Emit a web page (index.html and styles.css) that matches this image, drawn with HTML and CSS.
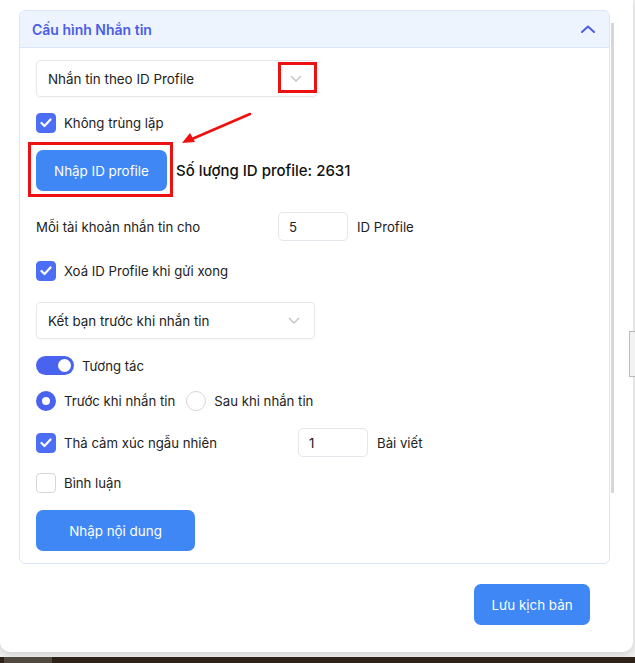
FILE: index.html
```html
<!DOCTYPE html>
<html lang="vi">
<head>
    <meta charset="UTF-8">
    <meta name="viewport" content="width=device-width, initial-scale=1.0">
    <title>Cấu hình Nhắn tin</title>
    <link rel="stylesheet" href="styles.css">
</head>
<body>
    <div class="modal">
        <div class="modal-body">
            <div class="scroll-area">
                <div class="card">
                    <div class="card-header">
                        <span class="card-title">Cấu hình Nhắn tin</span>
                        <svg class="chev-up" width="14" height="8" viewBox="0 0 14 8"><path d="M1 7 L7 1.5 L13 7" fill="none" stroke="#4b5ee4" stroke-width="2" stroke-linecap="round" stroke-linejoin="round"/></svg>
                    </div>
                    <div class="card-body">
                        <div class="select select-wide">
                            <span>Nhắn tin theo ID Profile</span>
                            <svg class="chev-down" width="12" height="7" viewBox="0 0 12 7"><path d="M1 1 L6 6 L11 1" fill="none" stroke="#c4c4c4" stroke-width="1.4"/></svg>
                            <span class="mark-box"></span>
                        </div>

                        <label class="check-row row-dup">
                            <span class="check on"><svg width="12" height="10" viewBox="0 0 12 10"><path d="M1.5 5 L4.5 8 L10.5 1.5" fill="none" stroke="#fff" stroke-width="2.2" stroke-linecap="round" stroke-linejoin="round"/></svg></span>
                            Không trùng lặp
                        </label>

                        <div class="import-row">
                            <button class="btn btn-marked">Nhập ID profile</button>
                            <span class="count">Số lượng ID profile: 2631</span>
                        </div>

                        <div class="field-row row-per">
                            <span class="field-label">Mỗi tài khoản nhắn tin cho</span>
                            <span class="num-input">5</span>
                            <span>ID Profile</span>
                        </div>

                        <label class="check-row row-del">
                            <span class="check on"><svg width="12" height="10" viewBox="0 0 12 10"><path d="M1.5 5 L4.5 8 L10.5 1.5" fill="none" stroke="#fff" stroke-width="2.2" stroke-linecap="round" stroke-linejoin="round"/></svg></span>
                            Xoá ID Profile khi gửi xong
                        </label>

                        <div class="select select-friend">
                            <span>Kết bạn trước khi nhắn tin</span>
                            <svg class="chev-down" width="12" height="7" viewBox="0 0 12 7"><path d="M1 1 L6 6 L11 1" fill="none" stroke="#c4c4c4" stroke-width="1.4"/></svg>
                        </div>

                        <div class="check-row row-toggle">
                            <span class="toggle"><span class="knob"></span></span>
                            Tương tác
                        </div>

                        <div class="radio-row">
                            <label class="radio-item"><span class="radio on"></span>Trước khi nhắn tin</label>
                            <label class="radio-item"><span class="radio"></span>Sau khi nhắn tin</label>
                        </div>

                        <div class="field-row row-react">
                            <label class="check-row field-label react-label">
                                <span class="check on"><svg width="12" height="10" viewBox="0 0 12 10"><path d="M1.5 5 L4.5 8 L10.5 1.5" fill="none" stroke="#fff" stroke-width="2.2" stroke-linecap="round" stroke-linejoin="round"/></svg></span>
                                Thả cảm xúc ngẫu nhiên
                            </label>
                            <span class="num-input">1</span>
                            <span>Bài viết</span>
                        </div>

                        <label class="check-row row-comment">
                            <span class="check"></span>
                            Bình luận
                        </label>

                        <button class="btn btn-content">Nhập nội dung</button>

                        <!-- mũi tên chú thích -->
                        <svg class="arrow" width="80" height="40" viewBox="0 0 80 40">
                            <path d="M70 2 L12 27" stroke="#f01010" stroke-width="2.6" stroke-linecap="round"/>
                            <path d="M2 31 L10 21 L15 30 Z" fill="#f01010"/>
                        </svg>
                    </div>
                </div>
                <div class="footer">
                    <button class="btn btn-save">Lưu kịch bản</button>
                </div>
            </div>
            <div class="scrollbar"></div>
        </div>
    </div>
    <div class="side-tab"></div>
    <div class="taskbar"><span class="task-item"></span></div>
</body>
</html>
```

FILE: styles.css
```css
html, body {
    margin: 0;
    padding: 0;
}
body {
    width: 635px;
    height: 663px;
    overflow: hidden;
    background: #f0f0f0;
    font-family: Inter, "Noto Sans", sans-serif;
    font-size: 13.2px;
    color: #222;
    position: relative;
}
.modal {
    width: 633px;
    height: 652px;
    background: #fff;
    border-radius: 0 0 10px 10px;
    box-shadow: 0 3px 6px rgba(0, 0, 0, 0.12);
}
.modal-body {
    display: flex;
}
.scroll-area {
    width: 591px;
    padding: 10px 0 0 19px;
}
.scrollbar {
    width: 3px;
    height: 470px;
    margin: 23px 0 0 1px;
    background: #d6d6d6;
}
.card {
    border: 1px solid #d9e5fb;
    border-radius: 6px;
    overflow: hidden;
}
.card-header {
    height: 36px;
    background: #edf4fe;
    border-bottom: 1px solid #d9e5fb;
    display: flex;
    align-items: center;
    justify-content: space-between;
    padding: 0 14px 0 12px;
}
.card-title {
    font-size: 14px;
    font-weight: 600;
    color: #4b5ee4;
}
.card-body {
    position: relative;
    padding: 12px 16px 12px 16px;
    display: flex;
    flex-direction: column;
    align-items: flex-start;
}
.select {
    height: 35px;
    border: 1px solid #e6e8ec;
    border-radius: 4px;
    box-shadow: 0 1px 2px rgba(0, 0, 0, 0.04);
    display: flex;
    align-items: center;
    justify-content: space-between;
    padding: 0 14px 0 11px;
    font-size: 13.4px;
    color: #222;
    position: relative;
}
.select-wide {
    width: 254px;
}
.select-friend {
    width: 252px;
    margin-top: 21px;
}
.mark-box {
    position: absolute;
    right: -1px;
    top: 1px;
    width: 33px;
    height: 25px;
    border: 3px solid #ee1111;
}
.check-row {
    display: flex;
    align-items: center;
    gap: 8px;
    height: 20px;
    font-size: 13.2px;
}
.row-dup { margin-top: 16px; }
.row-del { margin-top: 20px; }
.row-toggle { margin-top: 17px; height: 19px; }
.row-comment { margin-top: 16px; }
.check {
    width: 20px;
    height: 20px;
    box-sizing: border-box;
    border-radius: 4px;
    border: 1px solid #d3d7de;
    background: #fff;
    display: flex;
    align-items: center;
    justify-content: center;
}
.check.on {
    background: #4c6ef5;
    border-color: #4c6ef5;
}
.import-row {
    margin-top: 17px;
    display: flex;
    align-items: center;
}
.btn {
    border: none;
    border-radius: 7px;
    background: #3f87f5;
    color: #fff;
    font-family: Inter, "Noto Sans", sans-serif;
    font-size: 13.4px;
    height: 41px;
    padding: 0;
    cursor: pointer;
}
.btn-marked {
    width: 131px;
    position: relative;
}
/* khung đỏ chú thích */
.btn-marked::after {
    content: "";
    position: absolute;
    left: -8px;
    top: -8px;
    right: -6px;
    bottom: -6px;
    border: 3px solid #ee1111;
}
.count {
    margin-left: 9px;
    font-size: 15px;
    font-weight: 500;
    color: #111;
}
.field-row {
    display: flex;
    align-items: center;
    height: 29px;
    font-size: 13.2px;
}
.row-per { margin-top: 21px; }
.row-react { margin-top: 17px; }
.field-label {
    width: 242px;
}
.react-label {
    width: 262px;
}
.num-input {
    width: 58px;
    height: 27px;
    border: 1px solid #e3e6eb;
    border-radius: 5px;
    padding-left: 10px;
    display: flex;
    align-items: center;
    margin-right: 9px;
}
.toggle {
    width: 38px;
    height: 19px;
    border-radius: 10px;
    background: #4a63ee;
    position: relative;
}
.knob {
    position: absolute;
    right: 3px;
    top: 3px;
    width: 13px;
    height: 13px;
    border-radius: 50%;
    background: #fff;
}
.radio-row {
    margin-top: 16px;
    display: flex;
    gap: 11px;
    font-size: 13.2px;
}
.radio-item {
    display: flex;
    align-items: center;
    gap: 8px;
}
.radio {
    width: 20px;
    height: 20px;
    box-sizing: border-box;
    border-radius: 50%;
    border: 1px solid #d3d7de;
}
.radio.on {
    border: 6px solid #4a63ee;
}
.btn-content {
    margin-top: 17px;
    width: 159px;
}
.arrow {
    position: absolute;
    left: 160px;
    top: 64px;
}
.footer {
    display: flex;
    justify-content: flex-end;
    padding: 20px 20px 0 0;
}
.btn-save {
    width: 116px;
}
.side-tab {
    position: absolute;
    left: 629px;
    top: 331px;
    width: 8px;
    height: 44px;
    border: 1px solid #bbb;
    background: #f2f2f2;
}
.taskbar {
    position: absolute;
    left: 0;
    top: 657px;
    width: 635px;
    height: 6px;
    background: #2d2118;
}
.task-item {
    display: block;
    margin-left: 4px;
    width: 48px;
    height: 6px;
    background: #50493f;
}
```
